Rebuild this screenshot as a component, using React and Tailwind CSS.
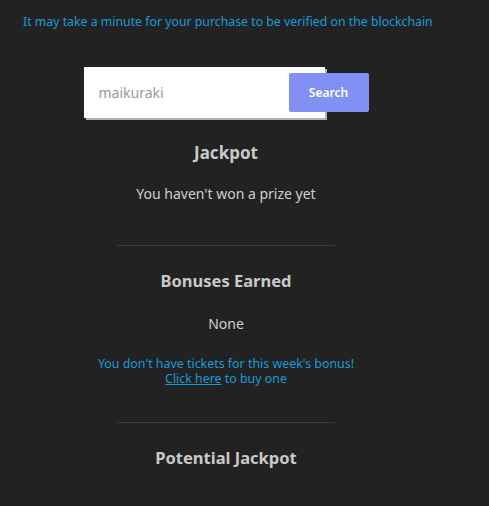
import React, { useState } from 'react';

const App = () => {
  const [name, setName] = useState('maikuraki');

  return (
    <div className="min-h-screen w-full bg-[#222222] font-['Noto_Sans',sans-serif]">
      <p className="pl-[23px] pt-[13px] text-[12.3px] leading-[18px] text-[#1a9ad8]">
        It may take a minute for your purchase to be verified on the blockchain
      </p>

      <div className="w-[452px] flex flex-col items-center text-center">
        {/* search */}
        <div className="mt-[36px] flex items-center">
          <input
            value={name}
            onChange={(e) => setName(e.target.value)}
            className="w-[241px] h-[51px] bg-white pl-[15px] text-[14px] text-[#999] shadow-[2px_2px_0_#b3b3b3] outline-none"
          />
          <button className="relative ml-[-36px] w-[80px] h-[39px] rounded-[2px] bg-[#8190f2] text-white text-[12px] font-semibold">
            Search
          </button>
        </div>

        <h2 className="mt-[23px] text-[17px] leading-[24px] font-bold text-[#c9c9c9]">Jackpot</h2>
        <p className="mt-[19px] text-[14px] leading-[20px] text-[#d0d0d0]">You haven't won a prize yet</p>

        <div className="mt-[41px] w-[218px] h-px bg-[#3a3a3a]" />

        <h2 className="mt-[23px] text-[16.5px] leading-[24px] font-bold text-[#c9c9c9]">Bonuses Earned</h2>
        <p className="mt-[21px] text-[14px] leading-[20px] text-[#d0d0d0]">None</p>

        <p className="mt-[23px] text-[12.4px] leading-[14.5px] text-[#1a9ad8]">
          You don't have tickets for this week's bonus!
          <br />
          <a href="#" className="underline">Click here</a> to buy one
        </p>

        <div className="mt-[36px] w-[218px] h-px bg-[#3a3a3a]" />

        <h2 className="mt-[23px] text-[16.5px] leading-[24px] font-bold text-[#c9c9c9]">Potential Jackpot</h2>
      </div>
    </div>
  );
};

export default App;
